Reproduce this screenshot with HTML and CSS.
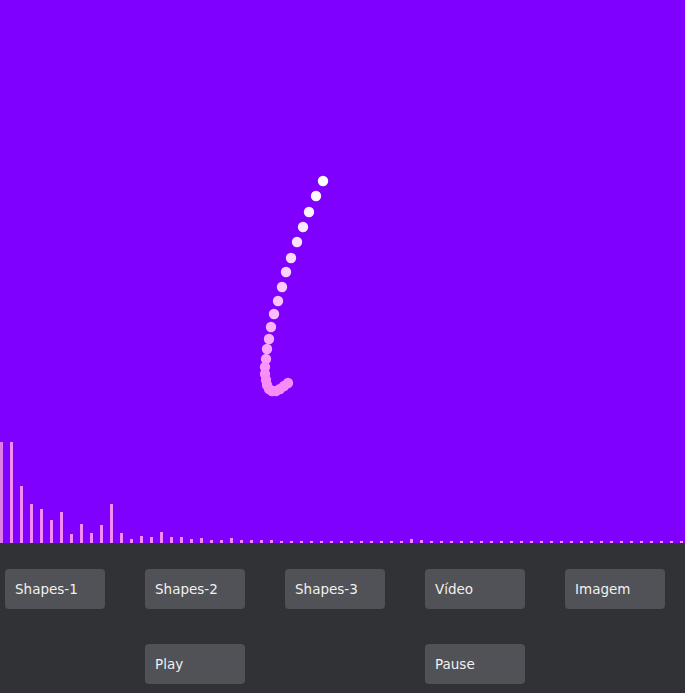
FILE: index.html
```html
<!DOCTYPE html>
<html>
<head>
<meta charset="utf-8">
<link rel="stylesheet" href="styles.css">
</head>
<body>
<div class="app">
  <div class="stage">
    <svg class="canvas" width="685" height="543" viewBox="0 0 685 543" id="cv"></svg>
  </div>
  <div class="panel">
    <button class="btn">Shapes-1</button>
    <button class="btn">Shapes-2</button>
    <button class="btn">Shapes-3</button>
    <button class="btn">Vídeo</button>
    <button class="btn">Imagem</button>
    <span class="slot"></span>
    <button class="btn">Play</button>
    <span class="slot"></span>
    <button class="btn">Pause</button>
    <span class="slot"></span>
  </div>
</div>
<script src="script.js"></script>
</body>
</html>
```
FILE: styles.css
```css
html, body {
  margin: 0;
  padding: 0;
  background: #313236;
}
.app {
  width: 685px;
  height: 693px;
  display: flex;
  flex-direction: column;
}
.stage {
  height: 543px;
  background: #7f00ff;
}
.canvas {
  display: block;
}
.panel {
  flex: 1;
  background: #313236;
  display: grid;
  grid-template-columns: repeat(5, 100px);
  column-gap: 40px;
  row-gap: 35px;
  padding: 26px 0 0 5px;
  align-content: start;
}
.btn {
  width: 100px;
  height: 40px;
  border: none;
  border-radius: 4px;
  background: #505257;
  color: #f0f0f0;
  font-family: "DejaVu Sans", sans-serif;
  font-size: 13.5px;
  text-align: left;
  padding: 0 0 0 10px;
  margin: 0;
}
.slot {
  display: block;
}
```
FILE: script.js
```js
(function () {
  var ns = "http://www.w3.org/2000/svg";
  var cv = document.getElementById("cv");
  var heights = [101,101,57,39,34,23,31,9,19,10,18,39,10,4,7,6,11,6,6,4,
                 5,3,3,5,3,3,3,3,2,2,2,2,2,2,2,2,2,2,2,2,2,4,3,2,2,2,2,2,2,2,
                 2,2,2,2,2,2,2,2,2,2,2,2,2,2,2,2,2,2,2];
  for (var i = 0; i < heights.length; i++) {
    var r = document.createElementNS(ns, "rect");
    r.setAttribute("x", i * 10);
    r.setAttribute("y", 543 - heights[i]);
    r.setAttribute("width", 3);
    r.setAttribute("height", heights[i]);
    r.setAttribute("fill", i === 0 ? "#e07ce8" : "#f58af5");
    cv.appendChild(r);
  }
  var pts = [[323,181],[316,196],[309,212],[303,227],[297,242],[291,258],[286,272],
             [282,287],[278,301],[274,314],[271,327],[269,339],[267,349],[266,359],
             [265,367],[265,374],[266,380],[267,385],[269,389],[272,391],[276,391],
             [280,389],[284,386],[288,383]];
  var n = pts.length;
  for (var j = 0; j < n; j++) {
    var t = Math.min(1, (j / (n - 1)) * 1.5);
    var rr = Math.round(255 + (247 - 255) * t);
    var gg = Math.round(255 + (140 - 255) * t);
    var bb = Math.round(255 + (247 - 255) * t);
    var c = document.createElementNS(ns, "circle");
    c.setAttribute("cx", pts[j][0]);
    c.setAttribute("cy", pts[j][1]);
    c.setAttribute("r", 5.2);
    c.setAttribute("fill", "rgb(" + rr + "," + gg + "," + bb + ")");
    cv.appendChild(c);
  }
})();
```
